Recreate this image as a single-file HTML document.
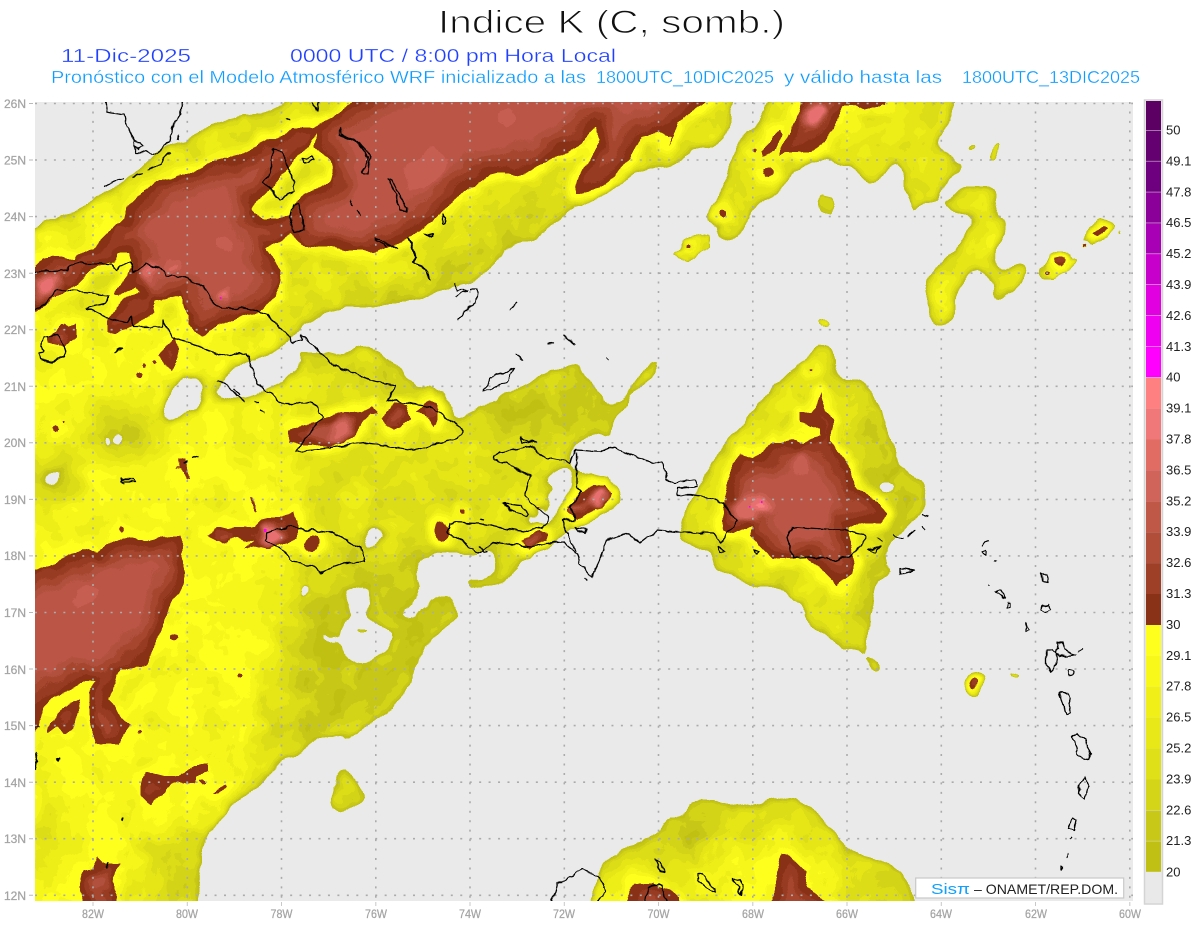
<!DOCTYPE html>
<html lang="es">
<head>
<meta charset="utf-8">
<title>Indice K</title>
<style>
html,body{margin:0;padding:0;background:#fff;width:1200px;height:927px;overflow:hidden}
svg{display:block;position:absolute;left:0;top:0}
text{font-family:"Liberation Sans",sans-serif}
.ttl{fill:#111;stroke:#fff;stroke-width:.95px;paint-order:fill stroke;font-size:32px}
.b1{fill:#2040ff;stroke:#fff;stroke-width:.3px;font-size:18px}
.b2{fill:#0c9cff;stroke:#fff;stroke-width:.3px;font-size:17.5px}
.ax{fill:#a4a4a4;stroke:#a4a4a4;stroke-width:.25px;font-size:12px}
.cb{fill:#222;font-size:13px}
</style>
</head>
<body>
<svg width="1200" height="927" viewBox="0 0 1200 927" xmlns="http://www.w3.org/2000/svg">
<defs>
<filter id="cm" filterUnits="userSpaceOnUse" x="0" y="0" width="1200" height="927" color-interpolation-filters="sRGB">
<feTurbulence type="fractalNoise" baseFrequency=".03" numOctaves="3" seed="4" result="n"/>
<feDisplacementMap in="SourceGraphic" in2="n" scale="12" xChannelSelector="R" yChannelSelector="G" result="d"/>
<feComponentTransfer in="d">
<feFuncR type="discrete" tableValues=".918 .918 .918 .918 .918 .918 .918 .918 .918 .918 .753 .784 .831 .863 .902 .933 .965 1 1 .541 .596 .651 .698 .737 .784 .847 .91 .973 1 1 1 1 1 1 1 1 1 1 1 1"/>
<feFuncG type="discrete" tableValues=".918 .918 .918 .918 .918 .918 .918 .918 .918 .918 .753 .784 .831 .863 .902 .933 .965 1 1 .196 .235 .275 .314 .337 .369 .408 .439 .502 0 0 0 0 0 0 0 0 0 0 0 0"/>
<feFuncB type="discrete" tableValues=".918 .918 .918 .918 .918 .918 .918 .918 .918 .918 .078 .094 .094 .094 .094 .094 .102 .118 .118 .094 .141 .188 .243 .275 .322 .376 .439 .502 1 1 1 1 1 1 1 1 1 1 1 1"/>
</feComponentTransfer>
</filter>
<filter id="nz" filterUnits="userSpaceOnUse" x="0" y="0" width="1200" height="927" color-interpolation-filters="sRGB">
<feTurbulence type="fractalNoise" baseFrequency=".035" numOctaves="3" seed="9"/>
<feColorMatrix values="1 0 0 0 0 1 0 0 0 0 1 0 0 0 0 0 0 0 0 1" result="g"/>
<feComposite in="SourceGraphic" in2="g" operator="arithmetic" k1="0" k2="1" k3=".12" k4="-.06"/>
</filter>
<filter id="dsp" filterUnits="userSpaceOnUse" x="0" y="0" width="1200" height="927" color-interpolation-filters="sRGB">
<feTurbulence type="fractalNoise" baseFrequency=".04" numOctaves="2" seed="17" result="n"/>
<feDisplacementMap in="SourceGraphic" in2="n" scale="16" xChannelSelector="R" yChannelSelector="G"/>
</filter>
<filter id="wig" filterUnits="userSpaceOnUse" x="0" y="0" width="1200" height="927" color-interpolation-filters="sRGB">
<feTurbulence type="fractalNoise" baseFrequency=".1" numOctaves="2" seed="6" result="n"/>
<feDisplacementMap in="SourceGraphic" in2="n" scale="6" xChannelSelector="R" yChannelSelector="G"/>
</filter>
<filter id="b5" filterUnits="userSpaceOnUse" x="0" y="0" width="1200" height="927" color-interpolation-filters="sRGB"><feGaussianBlur stdDeviation="5"/></filter>
<filter id="b14" filterUnits="userSpaceOnUse" x="0" y="0" width="1200" height="927" color-interpolation-filters="sRGB"><feGaussianBlur stdDeviation="14"/></filter>
<filter id="b3" filterUnits="userSpaceOnUse" x="0" y="0" width="1200" height="927" color-interpolation-filters="sRGB"><feGaussianBlur stdDeviation="3"/></filter>
<filter id="b2" filterUnits="userSpaceOnUse" x="0" y="0" width="1200" height="927" color-interpolation-filters="sRGB"><feGaussianBlur stdDeviation="1.5"/></filter>
<filter id="e6" filterUnits="userSpaceOnUse" x="0" y="0" width="1200" height="927" color-interpolation-filters="sRGB"><feMorphology operator="erode" radius="5"/><feGaussianBlur stdDeviation="2"/></filter>
<filter id="e12" filterUnits="userSpaceOnUse" x="0" y="0" width="1200" height="927" color-interpolation-filters="sRGB"><feMorphology operator="erode" radius="10"/><feGaussianBlur stdDeviation="2.5"/></filter>
<filter id="e18" filterUnits="userSpaceOnUse" x="0" y="0" width="1200" height="927" color-interpolation-filters="sRGB"><feMorphology operator="erode" radius="15"/><feGaussianBlur stdDeviation="3"/></filter>
<filter id="e26" filterUnits="userSpaceOnUse" x="0" y="0" width="1200" height="927" color-interpolation-filters="sRGB"><feMorphology operator="erode" radius="21"/><feGaussianBlur stdDeviation="4"/></filter>

<path id="yel" d="M0,250L35,228L60,215L100,197L130,178L160,150L200,133L215,125L240,118L280,105L320,60L745,60L733,102L735,118L717,142L697,152L667,168L637,170L610,192L577,205L560,222L533,242L527,238L503,255L480,278L453,287L400,305L367,308L333,310L300,330L293,340L267,353L233,367L213,390L217,398L247,398L283,385L293,373L302,363L297,347L333,352L367,348L383,355L400,367L417,387L447,393L453,420L480,405L510,390L540,375L580,362L595,390L615,405L640,375L660,350L655,375L632,395L620,413L613,433L580,440L573,457L570,463L577,472L600,478L617,490L623,503L600,517L587,523L570,528L560,540L533,553L513,572L493,585L470,593L465,585L490,573L497,563L493,550L443,553L423,563L418,573L423,590L402,612L397,628L432,596L450,595L458,603L458,617L435,637L423,660L407,690L388,715L363,723L358,735L347,740L345,755L342,747L345,738L342,730L335,737L317,736L307,750L278,760L263,783L230,807L212,830L205,850L197,887L198,927L0,927Z
M817,343L833,350L837,377L860,378L880,400L890,437L907,473L923,480L929,507L913,527L887,547L890,577L877,587L877,607L870,630L863,650L880,663L880,677L868,663L860,648L842,650L827,637L807,620L803,607L775,587L750,585L713,570L713,557L677,540L680,520L697,483L727,440L760,403L770,388L793,370Z
M590,927L590,902L600,877L603,858L630,840L660,832L667,819L682,818L687,803L700,798L733,803L753,809L773,795L793,797L823,815L848,848L890,863L900,873L917,902L925,927Z
M772,90L955,90L953,118L940,137L937,152L948,152L952,167L968,165L943,185L935,208L930,195L915,215L908,195L902,190L907,173L893,160L877,182L860,185L855,160L847,170L833,163L830,155L800,168L780,188L760,205L730,245L713,235L730,227L708,225L705,217L717,202L727,165L743,138L760,125Z
M945,205L962,185L993,187L999,198L990,218L1003,217L1008,228L993,262L1000,272L1022,258L1025,265L1022,285L1007,295L995,302L988,282L972,268L958,292L957,322L943,328L930,318L923,292L937,265L973,225L975,215L960,215Z
M342,764L367,790L365,802L347,812L330,803L330,783Z"/>
<clipPath id="yc"><use href="#yel"/></clipPath>
<clipPath id="plot"><rect x="35" y="102" width="1098" height="799"/></clipPath>

<g id="br" fill-rule="evenodd">
<path d="M0,325L35,312L53,298L80,287L93,267L112,263L115,253L128,253L133,263L123,278L113,295L118,297L133,287L137,290L123,300L107,320L107,333L115,337L133,327L155,312L153,300L182,298L183,303L185,327L203,337L220,325L243,315L263,310L277,298L283,273L275,258L268,248L292,235L300,242L342,253L377,253L410,238L433,223L457,198L473,185L490,172L517,174L547,165L577,145L597,128L598,137L587,162L575,183L575,193L590,188L610,182L630,158L643,135L658,132L670,137L667,148L677,125L700,108L708,102L750,60L420,60L357,100L310,128L293,127L260,143L227,160L187,173L157,178L140,197L125,207L123,217L110,230L93,247L80,252L77,257L53,255L43,257L35,267L0,268Z
M315,133L300,153L287,170L273,190L257,200L252,208L263,217L277,218L293,213L300,197L317,188L330,180L333,167L328,160L315,153L310,147Z"/>
<path d="M0,585L35,569L73,552L83,548L98,552L107,545L130,539L155,541L182,532L185,543L183,580L163,620L155,647L145,663L123,673L108,700L132,723L118,743L95,743L90,720L88,692L95,682L80,683L50,700L43,707L40,727L35,733L0,745Z"/>
<path d="M77,700L78,710L72,728L65,735L58,727L50,733L50,727L57,712Z"/>
<path d="M147,770L163,778L177,780L193,765L210,763L210,771L195,777L195,785L170,787L152,808L142,797L145,783Z"/>
<path d="M210,790L223,781L225,785L217,790Z"/>
<ellipse cx="203" cy="781" rx="4" ry="2"/>
<ellipse cx="177" cy="637" rx="5" ry="4"/>
<circle cx="242" cy="677" r="2"/>
<circle cx="139" cy="733" r="2.5"/>
<path d="M97,856L103,862L120,863L115,878L116,887L113,927L88,927L82,873L83,870L93,868Z"/>
<path d="M50,335L76,324L75,337L63,347L50,343Z"/>
<path d="M172,337L177,350L170,372L160,355Z"/>
<circle cx="155" cy="361" r="2"/><circle cx="144" cy="365" r="2"/><circle cx="140" cy="375" r="3.5"/>
<circle cx="54" cy="431" r="3"/><circle cx="62" cy="423" r="1.2"/>
<path d="M176,460L182,460L191,480L188,481Z"/>
<path d="M287,430L323,417L362,412L372,405L378,412L370,412L362,423L353,440L330,448L303,447L297,445L287,442Z"/>
<path d="M382,417L393,403L405,405L409,420L395,430Z"/>
<path d="M413,410L427,400L437,403L437,417L433,425L427,415Z"/>
<path d="M207,535L217,528L253,527L263,517L282,515L295,510L298,537L290,545L267,550L242,547L253,542L227,537L217,540Z"/>
<ellipse cx="313" cy="543" rx="6.5" ry="8"/>
<circle cx="120" cy="532" r="3"/>
<path d="M250,497L253,498L257,510L255,511Z"/>
<ellipse cx="442" cy="531" rx="7" ry="8"/><circle cx="461" cy="511" r="3"/><circle cx="537" cy="507" r="1.5"/>
<path d="M520,543L538,530L548,533L548,543L532,550Z"/>
<path d="M568,510L580,493L590,483L603,482L611,490L610,497L592,513L577,522Z"/>
<path d="M825,392L823,413L832,420L830,440L847,463L860,490L880,502L887,512L880,522L847,527L847,540L853,563L853,575L837,587L817,568L803,558L773,560L748,538L750,527L740,533L732,533L722,530L723,503L732,463L740,453L753,457L773,443L793,437L803,443L817,437L817,430L800,423L800,415L812,415Z"/>
<path d="M803,90L887,90L885,104L845,108L827,138L813,150L800,152L787,153L777,158L783,145L793,132Z"/>
<path d="M782,129L786,133L775,150L764,158L763,152L773,135Z"/>
<circle cx="767" cy="172" r="4"/><circle cx="757" cy="152" r="2"/><circle cx="722" cy="213" r="4"/>
<circle cx="689" cy="245" r="2.5"/>
<circle cx="1060" cy="260" r="5"/><circle cx="1047" cy="273" r="2.5"/><circle cx="1085" cy="246" r="2"/>
<path d="M1093,234L1103,224L1107,227L1098,238Z"/>
<ellipse cx="976" cy="684" rx="4.5" ry="5.5"/>
<path d="M625,927L625,902L637,885L657,883L678,900L685,927Z"/>
<path d="M770,927L773,902L781,855L788,856L805,870L810,887L827,902L850,927Z"/>
<ellipse cx="811" cy="369" rx="2" ry="1"/>
</g>
</defs>

<!-- title text -->
<text class="ttl" x="438" y="33" textLength="347" lengthAdjust="spacingAndGlyphs">Indice K (C, somb.)</text>
<text class="b1" x="61" y="62" textLength="130" lengthAdjust="spacingAndGlyphs">11-Dic-2025</text>
<text class="b1" x="290" y="62" textLength="326" lengthAdjust="spacingAndGlyphs">0000 UTC / 8:00 pm Hora Local</text>
<text class="b2" x="51" y="83" textLength="535" lengthAdjust="spacingAndGlyphs">Pronóstico con el Modelo Atmosférico WRF inicializado a las</text>
<text class="b2" x="596" y="83" textLength="178" lengthAdjust="spacingAndGlyphs">1800UTC_10DIC2025</text>
<text class="b2" x="784" y="83" textLength="158" lengthAdjust="spacingAndGlyphs">y válido hasta las</text>
<text class="b2" x="962" y="83" textLength="178" lengthAdjust="spacingAndGlyphs">1800UTC_13DIC2025</text>

<!-- scalar field -->
<g clip-path="url(#plot)">
<g filter="url(#cm)">
<g filter="url(#nz)">
<rect width="1200" height="927" fill="#000"/>
<g filter="url(#b5)">
  <use href="#yel" fill="#5c5c5c" stroke="#5c5c5c" stroke-width="5" stroke-linejoin="round"/>
  <g clip-path="url(#yc)">
  <g filter="url(#b14)">
    <path d="M0,300L280,340L300,560L230,800L190,927L0,927Z" fill="#6a6a6a"/>
    <path d="M35,240L110,195L180,150L130,220L40,270Z" fill="#696969"/>
    <ellipse cx="213" cy="637" rx="26" ry="34" fill="#6e6e6e"/>
    <ellipse cx="240" cy="662" rx="32" ry="20" fill="#6e6e6e"/>
    <ellipse cx="130" cy="825" rx="55" ry="30" fill="#6e6e6e"/>
    <ellipse cx="200" cy="480" rx="55" ry="20" fill="#6e6e6e"/>
    <ellipse cx="123" cy="430" rx="32" ry="26" fill="#464646"/>
    <ellipse cx="48" cy="478" rx="30" ry="26" fill="#4a4a4a"/>
    <ellipse cx="53" cy="830" rx="14" ry="38" fill="#585858"/>
    <path d="M300,420L470,410L640,360L640,600L450,600L310,560Z" fill="#5a5a5a"/>
    <path d="M300,575L470,545L470,625L400,700L340,745L295,745L285,650Z" fill="#4a4a4a"/>
    <path d="M470,400L580,360L625,400L610,440L500,440Z" fill="#4a4a4a"/>
    <path d="M440,550L500,540L510,575L470,595Z" fill="#4c4c4c"/>
    <path d="M420,275L480,240L540,195L560,210L500,255L450,285Z" fill="#484848"/>
    <path d="M295,335L330,303L450,283L450,296L380,312L330,320L305,342Z" fill="#464646"/>
    <path d="M300,350L450,385L450,400L330,385Z" fill="#4c4c4c"/>
    <path d="M150,830L210,830L200,927L140,927Z" fill="#505050"/>
    <path d="M855,400L890,430L920,490L905,560L882,605L862,640L848,620L880,540L860,470Z" fill="#4a4a4a"/>
    <path d="M680,520L720,530L725,570L680,560Z" fill="#505050"/>
    <ellipse cx="770" cy="885" rx="66" ry="46" fill="#6e6e6e"/>
    <ellipse cx="640" cy="905" rx="44" ry="34" fill="#6e6e6e"/>
    <path d="M620,840L700,800L745,815L690,860L640,860Z" fill="#4a4a4a"/>
    <path d="M860,860L910,880L930,927L870,927Z" fill="#4c4c4c"/>
    <ellipse cx="947" cy="290" rx="12" ry="28" fill="#6e6e6e"/>
    <ellipse cx="983" cy="240" rx="12" ry="14" fill="#6e6e6e"/>
    <ellipse cx="345" cy="790" rx="18" ry="18" fill="#4a4a4a"/>
    <ellipse cx="830" cy="125" rx="50" ry="20" fill="#666666"/>
  </g>
  </g>
  <!-- large holes -->
  <path d="M182,380L203,378L203,393L193,410L170,418L162,413L173,390Z" fill="#000"/>
  <path d="M345,592L370,597L360,613L390,635L377,653L363,658L345,653L345,633L360,613Z" fill="#000"/>
  <path d="M373,530L388,533L377,543L368,548L362,543Z" fill="#000"/>
  <path d="M557,467L567,473L569,485L563,500L550,517L542,503L555,497L548,480Z" fill="#000"/>
  <path d="M513,513L527,518L547,522L548,515L540,507L527,515Z" fill="#000"/>
  <path d="M43,480L58,469L63,473L52,482Z" fill="#000"/>
</g>
<!-- small holes and islets -->
<g filter="url(#b2)">
  <ellipse cx="303" cy="591" rx="3" ry="5" fill="#000"/>
  <circle cx="119" cy="439" r="3.5" fill="#000"/>
  <ellipse cx="107" cy="441" rx="1.5" ry="3" fill="#000"/>
  <ellipse cx="888" cy="485" rx="6" ry="4" fill="#000"/>
  <ellipse cx="363" cy="630" rx="7" ry="4" fill="#4c4c4c"/>
  <path d="M1117,227L1123,232L1123,237L1118,234Z" fill="#505050"/>
  <ellipse cx="969" cy="148" rx="5" ry="3.5" transform="rotate(-35 969 148)" fill="#505050"/>
  <ellipse cx="994" cy="151" rx="4" ry="11" transform="rotate(18 994 151)" fill="#565656"/>
  <path d="M820,193L835,198L830,217L817,213L815,202Z" fill="#505050"/>
  <path d="M813,170L815,170L815,192L813,192Z" fill="#505050"/>
  <path d="M697,233L710,235L710,250L698,252L697,258L685,267L672,253L683,250L683,238Z" fill="#5c5c5c"/>
  <ellipse cx="823" cy="322" rx="7" ry="5" fill="#5c5c5c"/>
  <circle cx="855" cy="244" r="2" fill="#505050"/>
  <ellipse cx="1014" cy="675" rx="5" ry="3" transform="rotate(35 1014 675)" fill="#5c5c5c"/>
  <path d="M1060,250L1070,260L1080,258L1072,270L1057,275L1053,280L1042,275L1048,262Z" fill="#5c5c5c"/>
</g>
<!-- halos -->
<g filter="url(#b3)"><use href="#br" fill="#6f6f6f" stroke="#6f6f6f" stroke-width="15" stroke-linejoin="round"/></g>
</g>
<!-- brown levels -->
<use href="#br" fill="#7c7c7c"/>
<g filter="url(#dsp)">
<use href="#br" fill="#838383" filter="url(#e6)"/>
<use href="#br" fill="#898989" filter="url(#e12)"/>
<use href="#br" fill="#8f8f8f" filter="url(#e18)"/>
<use href="#br" fill="#969696" filter="url(#e26)"/>
<g filter="url(#b3)">
  <path d="M403,175L433,143L448,157L438,185L413,195Z" fill="#9c9c9c"/>
  <ellipse cx="507" cy="117" rx="7" ry="10" fill="#9c9c9c"/>
  <ellipse cx="810" cy="115" rx="11" ry="12" fill="#a9a9a9"/>
  <ellipse cx="798" cy="465" rx="9" ry="8" fill="#9c9c9c"/>
  <ellipse cx="748" cy="507" rx="14" ry="14" fill="#a3a3a3"/>
  <ellipse cx="763" cy="503" rx="7" ry="7" fill="#afafaf"/>
  <ellipse cx="150" cy="273" rx="9" ry="5" fill="#a9a9a9"/>
  <ellipse cx="172" cy="266" rx="7" ry="5" fill="#a3a3a3"/>
  <ellipse cx="222" cy="297" rx="6" ry="6" fill="#a9a9a9"/>
  <ellipse cx="47" cy="287" rx="10" ry="10" fill="#a9a9a9"/>
  <ellipse cx="225" cy="242" rx="9" ry="9" fill="#9c9c9c"/>
  <ellipse cx="190" cy="245" rx="30" ry="14" fill="#969696"/>
  <ellipse cx="340" cy="430" rx="10" ry="13" fill="#a3a3a3"/>
  <ellipse cx="322" cy="432" rx="14" ry="8" fill="#8f8f8f"/>
  <ellipse cx="274" cy="536" rx="14" ry="11" fill="#a9a9a9"/>
  <ellipse cx="225" cy="535" rx="8" ry="5" fill="#898989"/>
  <ellipse cx="395" cy="417" rx="6" ry="7" fill="#898989"/>
  <ellipse cx="426" cy="410" rx="5" ry="5" fill="#898989"/>
  <ellipse cx="597" cy="496" rx="13" ry="8" transform="rotate(-40 597 496)" fill="#a9a9a9"/>
  <ellipse cx="578" cy="510" rx="6" ry="6" fill="#8f8f8f"/>
  <ellipse cx="534" cy="540" rx="9" ry="5" fill="#8f8f8f"/>
  <ellipse cx="85" cy="595" rx="14" ry="10" transform="rotate(-30 85 595)" fill="#9c9c9c"/>
  <ellipse cx="102" cy="883" rx="7" ry="9" fill="#8f8f8f"/>
  <ellipse cx="60" cy="338" rx="7" ry="6" fill="#898989"/>
  <ellipse cx="168" cy="355" rx="3" ry="7" fill="#838383"/>
  <ellipse cx="1060" cy="260" rx="4" ry="3" fill="#8f8f8f"/>
  <ellipse cx="976" cy="684" rx="3" ry="4" fill="#8f8f8f"/>
  <path d="M1096,234L1103,227L1104,228L1098,235Z" fill="#8f8f8f"/>
</g>
</g>
</g>

<!-- magenta pixels -->
<g fill="#ff00ff">
<rect x="220" y="297" width="1.5" height="2"/><rect x="264" y="529" width="2.5" height="3"/>
<rect x="749" y="506" width="1.5" height="1.5"/><rect x="761" y="501" width="1.5" height="2"/>
</g>

<!-- grid -->
<path d="M35,103.5H1133M35,160H1133M35,216.6H1133M35,273.2H1133M35,329.7H1133M35,386.3H1133M35,442.8H1133M35,499.4H1133M35,555.9H1133M35,612.5H1133M35,669H1133M35,725.6H1133M35,782.2H1133M35,838.7H1133M35,895.3H1133" fill="none" stroke="#ababab" stroke-width="1.6" stroke-dasharray="2 7.45"/>
<path d="M93,102V901M187.3,102V901M281.5,102V901M375.8,102V901M470,102V901M564.3,102V901M658.5,102V901M752.8,102V901M847,102V901M941.3,102V901M1035.5,102V901M1129.8,102V901" fill="none" stroke="#ababab" stroke-width="1.6" stroke-dasharray="2 7.45"/>

<!-- coastlines -->
<g filter="url(#wig)">
<g fill="none" stroke="#000" stroke-width="1.3" stroke-linejoin="round">
<path d="M105,102L107,112L123,115L128,127L135,142L133,146L136,152L143,152L157,153L165,147L170,142L172,128L180,113L182,102"/>
<path d="M135,142L141,143L144,147L138,149L133,146"/>
<path d="M102,186L123,178M133,177L143,173M148,170L160,163L170,152M178,140L180,134"/>
<path d="M311,103L318,110L320,102M287,117L290,120"/>
<path d="M272,150L282,152L293,180L295,192L280,200L272,190L262,183L268,177L272,167Z"/>
<path d="M298,205L303,217L304,230L293,232L290,217L293,205Z"/>
<path d="M302,158L312,157L314,160L306,162Z"/>
<path d="M340,128L343,135L358,142L370,155L368,173L362,172L367,163L368,157L358,143L340,135Z"/>
<path d="M388,178L392,180L400,197L408,208L408,211L400,210L396,195Z"/>
<path d="M350,200L353,205M357,210L360,217M375,237L385,243L398,250M375,237L377,241L386,246"/>
<path d="M408,237L417,257L415,263L428,272L430,280L423,268L414,263L416,257L410,243Z"/>
<path d="M427,235L433,233L431,237ZM425,235L433,236M443,215L446,218L445,225L443,224Z"/>
<path d="M453,283L457,290L467,290L455,297M470,290L477,290L475,303L467,310L457,320"/>
<path d="M484,390L490,378L515,368L508,380L490,390ZM515,355L522,360M510,310L517,303M563,335L575,345M549,344L555,343M605,358L608,360M480,519L484,520"/>
<path d="M35,272L67,270L75,263L110,263L115,270L130,263L133,272L147,265L160,268L167,275L187,278L203,287L210,298L222,308L243,308L258,312L267,315L287,335L293,342L302,340L302,335L320,352L335,367L353,372L370,380L395,385L388,400L408,403L430,407L463,430L457,438L413,450L367,443L330,448L295,452L323,417L313,403L280,403L257,383L247,352L223,356L173,337L163,320L163,327L133,327L132,315L127,323L107,318L87,308L107,303L108,295L90,292L57,290L35,312"/>
<path d="M43,337L42,347L45,352L38,353L40,358L52,362L65,355L62,340L57,335Z"/>
<path d="M113,353L123,347M121,478L122,481L135,481L134,479L123,479ZM121,480L125,484M182,462L187,460M192,459L198,457M217,380L228,387L245,402M256,403L260,403M260,410L265,413M233,388L240,395"/>
<path d="M265,533L287,527L333,533L360,547L365,562L347,563L320,572L310,565L292,562L280,547L265,542Z"/>
<path d="M495,457L500,452L530,447L548,458L570,462L577,450L600,452L610,447L637,457L653,463L663,463L667,480L673,483L695,480L697,487L677,488L677,495L690,495L710,498L723,503L737,521L720,543L713,533L693,532L677,532L657,530L640,543L627,532L617,537L607,540L597,567L592,577L580,563L577,553L563,542L547,543L530,547L493,542L478,553L473,550L462,540L448,533L450,522L480,523L497,527L527,532L547,525L548,517L525,497L530,475L513,467L495,460Z"/>
<path d="M577,453L577,487L582,492L570,507L575,520L563,520L567,533L575,550"/>
<path d="M503,503L520,505L527,513L525,517L510,510ZM520,438L535,443L522,442ZM575,527L587,530L585,533L577,530ZM480,547L484,552L488,552M586,578L588,581"/>
<path d="M792,527L842,530L865,535L863,543L853,555L837,560L808,557L792,558L787,537Z"/>
<path d="M717,547L725,550L720,553ZM755,550L760,552L757,555ZM867,550L880,547L876,552ZM878,538L883,541M893,535L902,538M907,537L915,530L910,536ZM922,527L925,530M922,514L928,516M900,568L915,570L900,574Z"/>
<path d="M982,545L988,541M982,552L987,550L987,555L983,554ZM994,561L996,562M989,585L989,587M995,592L1000,590L1005,598L1002,597ZM1007,602L1010,602L1010,607L1006,607ZM1027,623L1029,630L1025,631Z"/>
<path d="M1042,573L1047,576L1048,582L1043,581ZM1042,605L1047,604L1051,610L1045,613L1041,610Z"/>
<path d="M1046,650L1053,650L1057,655L1055,668L1052,672L1046,665ZM1058,642L1063,642L1065,650L1075,655L1060,657L1056,654L1059,648ZM1078,652L1083,649"/>
<circle cx="1070" cy="673" r="3.5"/>
<path d="M1059,692L1068,693L1071,703L1069,713L1065,714L1062,703ZM1072,737L1077,733L1085,740L1091,755L1089,759L1078,755L1077,748ZM1085,777L1088,787L1085,798L1079,793L1080,785ZM1073,817L1077,820L1075,830L1069,828L1071,822ZM1072,837L1070,839M1068,853L1067,857M1061,867L1063,869L1061,870Z"/>
<path d="M550,902L555,892L557,882L565,882L568,877L577,872L582,869L598,875L606,890L597,902M645,902L648,888L657,884L662,886L667,902"/>
<path d="M655,860L660,863L664,872L660,871ZM698,875L703,874L710,883L716,890L716,893L708,889L698,880ZM733,878L740,880L743,885L741,894L737,885L733,882Z"/>
<path d="M57,759L59,758L59,761ZM35,752L38,762L36,770M107,862L107,868M123,817L122,821M32,727L40,726"/>
</g>
</g>

<!-- logo box -->
<rect x="915.7" y="878" width="208" height="20" fill="#fff" stroke="#c8c8c8" stroke-width="1.2"/>
<text x="931" y="894" fill="#10a0ff" font-size="15" textLength="39" lengthAdjust="spacingAndGlyphs">Sisπ</text>
<text x="974" y="894" fill="#222" font-size="14" textLength="144" lengthAdjust="spacingAndGlyphs">– ONAMET/REP.DOM.</text>
</g>

<!-- ticks -->
<path d="M29,103.5H33M29,160H33M29,216.6H33M29,273.2H33M29,329.7H33M29,386.3H33M29,442.8H33M29,499.4H33M29,555.9H33M29,612.5H33M29,669H33M29,725.6H33M29,782.2H33M29,838.7H33M29,895.3H33" stroke="#b8b8b8" stroke-width="1" fill="none"/>
<path d="M93,902V906M187.3,902V906M281.5,902V906M375.8,902V906M470,902V906M564.3,902V906M658.5,902V906M752.8,902V906M847,902V906M941.3,902V906M1035.5,902V906M1129.8,902V906" stroke="#c8c8c8" stroke-width="1" fill="none"/>

<!-- lat labels -->
<g>
<text class="ax" x="4" y="108">26N</text><text class="ax" x="4" y="164.5">25N</text><text class="ax" x="4" y="221">24N</text><text class="ax" x="4" y="278">23N</text><text class="ax" x="4" y="334">22N</text><text class="ax" x="4" y="391">21N</text><text class="ax" x="4" y="447">20N</text><text class="ax" x="4" y="504">19N</text><text class="ax" x="4" y="560">18N</text><text class="ax" x="4" y="617">17N</text><text class="ax" x="4" y="674">16N</text><text class="ax" x="4" y="730">15N</text><text class="ax" x="4" y="787">14N</text><text class="ax" x="4" y="843">13N</text><text class="ax" x="4" y="900">12N</text>
</g>
<!-- lon labels -->
<g>
<text class="ax" x="82" y="918" textLength="22" lengthAdjust="spacingAndGlyphs">82W</text><text class="ax" x="176" y="918" textLength="22" lengthAdjust="spacingAndGlyphs">80W</text><text class="ax" x="270.5" y="918" textLength="22" lengthAdjust="spacingAndGlyphs">78W</text><text class="ax" x="365" y="918" textLength="22" lengthAdjust="spacingAndGlyphs">76W</text><text class="ax" x="459" y="918" textLength="22" lengthAdjust="spacingAndGlyphs">74W</text><text class="ax" x="553" y="918" textLength="22" lengthAdjust="spacingAndGlyphs">72W</text><text class="ax" x="647.5" y="918" textLength="22" lengthAdjust="spacingAndGlyphs">70W</text><text class="ax" x="742" y="918" textLength="22" lengthAdjust="spacingAndGlyphs">68W</text><text class="ax" x="836" y="918" textLength="22" lengthAdjust="spacingAndGlyphs">66W</text><text class="ax" x="930" y="918" textLength="22" lengthAdjust="spacingAndGlyphs">64W</text><text class="ax" x="1025" y="918" textLength="22" lengthAdjust="spacingAndGlyphs">62W</text><text class="ax" x="1119" y="918" textLength="22" lengthAdjust="spacingAndGlyphs">60W</text>
</g>

<!-- colour bar -->
<rect x="1144.5" y="100" width="18" height="804" fill="#e9e9e9" stroke="#d4d4d4" stroke-width="1.5"/>
<g>
<rect x="1146" y="101" width="15" height="29" fill="#5c0064"/>
<rect x="1146" y="130.5" width="15" height="30.4" fill="#640070"/>
<rect x="1146" y="161.4" width="15" height="30.4" fill="#6e0080"/>
<rect x="1146" y="192.3" width="15" height="30.4" fill="#8a0098"/>
<rect x="1146" y="223.2" width="15" height="30.4" fill="#a800b4"/>
<rect x="1146" y="254.1" width="15" height="30.4" fill="#c800cc"/>
<rect x="1146" y="285" width="15" height="30.4" fill="#e000e0"/>
<rect x="1146" y="315.9" width="15" height="30.4" fill="#f000f0"/>
<rect x="1146" y="346.8" width="15" height="30.4" fill="#ff00ff"/>
<rect x="1146" y="377.7" width="15" height="30.9" fill="#ff8080"/>
<rect x="1146" y="408.6" width="15" height="30.9" fill="#f07878"/>
<rect x="1146" y="439.5" width="15" height="30.9" fill="#e06c64"/>
<rect x="1146" y="470.4" width="15" height="30.9" fill="#d0645a"/>
<rect x="1146" y="501.3" width="15" height="30.9" fill="#c05848"/>
<rect x="1146" y="532.2" width="15" height="30.9" fill="#b04e3a"/>
<rect x="1146" y="563.1" width="15" height="30.9" fill="#9e4028"/>
<rect x="1146" y="594" width="15" height="31" fill="#8a3218"/>
<rect x="1146" y="625" width="15" height="30.9" fill="#ffff1e"/>
<rect x="1146" y="655.9" width="15" height="30.9" fill="#f8f81a"/>
<rect x="1146" y="686.8" width="15" height="30.9" fill="#f0f018"/>
<rect x="1146" y="717.7" width="15" height="30.9" fill="#e8e818"/>
<rect x="1146" y="748.6" width="15" height="30.9" fill="#e0e018"/>
<rect x="1146" y="779.5" width="15" height="30.5" fill="#d4d418"/>
<rect x="1146" y="810.4" width="15" height="30.5" fill="#c8c818"/>
<rect x="1146" y="841.3" width="15" height="30.5" fill="#c0c014"/>
</g>
<g>
<text class="cb" x="1166" y="134.5">50</text><text class="cb" x="1166" y="165.4">49.1</text><text class="cb" x="1166" y="196.3">47.8</text><text class="cb" x="1166" y="227.2">46.5</text><text class="cb" x="1166" y="258.1">45.2</text><text class="cb" x="1166" y="289">43.9</text><text class="cb" x="1166" y="319.9">42.6</text><text class="cb" x="1166" y="350.8">41.3</text><text class="cb" x="1166" y="381.7">40</text><text class="cb" x="1166" y="412.6">39.1</text><text class="cb" x="1166" y="443.5">37.8</text><text class="cb" x="1166" y="474.4">36.5</text><text class="cb" x="1166" y="505.3">35.2</text><text class="cb" x="1166" y="536.2">33.9</text><text class="cb" x="1166" y="567.1">32.6</text><text class="cb" x="1166" y="598">31.3</text><text class="cb" x="1166" y="628.9">30</text><text class="cb" x="1166" y="659.8">29.1</text><text class="cb" x="1166" y="690.7">27.8</text><text class="cb" x="1166" y="721.6">26.5</text><text class="cb" x="1166" y="752.5">25.2</text><text class="cb" x="1166" y="783.4">23.9</text><text class="cb" x="1166" y="814.3">22.6</text><text class="cb" x="1166" y="845.2">21.3</text><text class="cb" x="1166" y="876.5">20</text>
</g>
</svg>
</body>
</html>
